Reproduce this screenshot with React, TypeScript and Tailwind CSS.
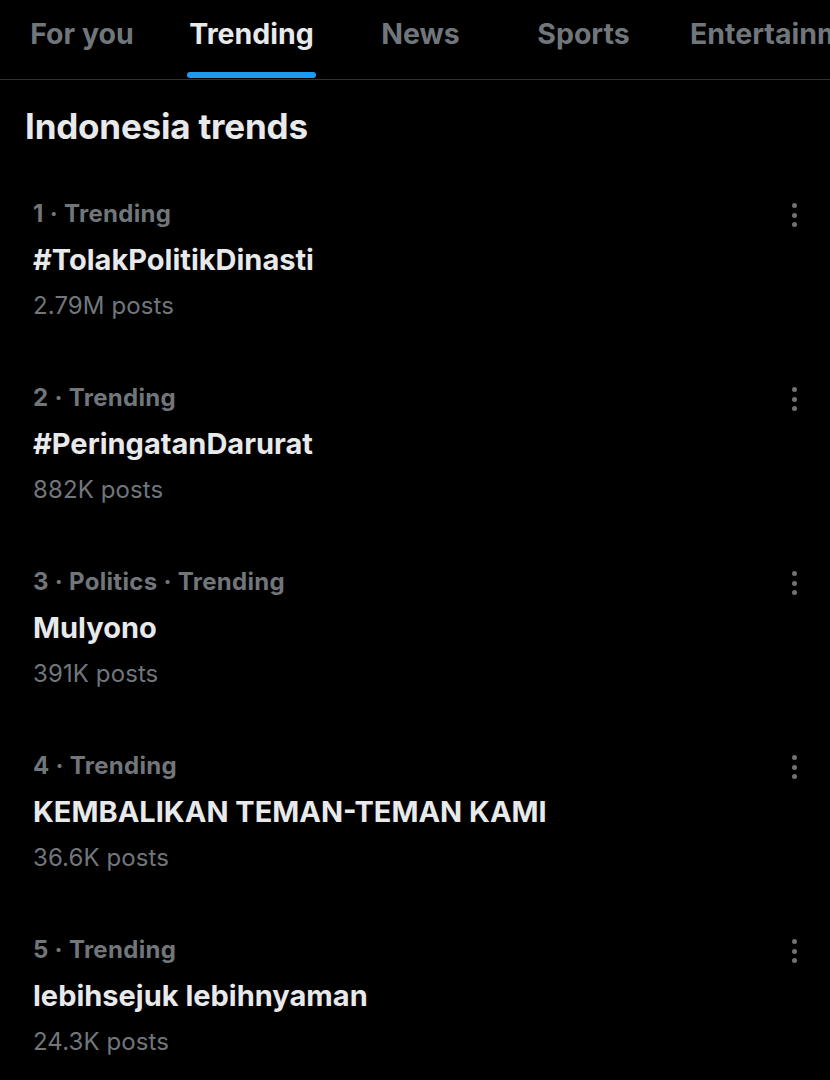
const tabs = [
  { label: "For you", w: "w-[164px] justify-center" },
  { label: "Trending", w: "w-[175px] justify-center", active: true },
  { label: "News", w: "w-[163px] justify-center" },
  { label: "Sports", w: "w-[163px] justify-center" },
  { label: "Entertainment", w: "w-[240px] justify-start pl-[25px]" },
];

const trends = [
  { meta: "1 · Trending", title: "#TolakPolitikDinasti", posts: "2.79M posts" },
  { meta: "2 · Trending", title: "#PeringatanDarurat", posts: "882K posts" },
  { meta: "3 · Politics · Trending", title: "Mulyono", posts: "391K posts" },
  { meta: "4 · Trending", title: "KEMBALIKAN TEMAN-TEMAN KAMI", posts: "36.6K posts" },
  { meta: "5 · Trending", title: "lebihsejuk lebihnyaman", posts: "24.3K posts" },
];

function MoreDots() {
  return (
    <div className="flex flex-col items-center gap-[4.5px]">
      <span className="block h-[5px] w-[5px] rounded-full bg-[#6f7275]" />
      <span className="block h-[5px] w-[5px] rounded-full bg-[#6f7275]" />
      <span className="block h-[5px] w-[5px] rounded-full bg-[#6f7275]" />
    </div>
  );
}

export default function App() {
  return (
    <div
      className="min-h-screen w-[830px] overflow-hidden bg-black text-[#e7e9ea]"
      style={{ fontFamily: "Inter, 'Noto Sans', sans-serif" }}
    >
      {/* tabs */}
      <div className="flex h-[80px] border-b border-[#2f3336] whitespace-nowrap overflow-hidden">
        {tabs.map((t) => (
          <div key={t.label} className={`${t.w} shrink-0 flex`}>
            <div className="flex flex-col items-stretch">
              <span
                className={`pt-[14px] text-[28.5px] font-bold leading-[40px] ${
                  t.active ? "text-[#e7e9ea]" : "text-[#71767b]"
                }`}
              >
                {t.label}
              </span>
              {t.active && <div className="mt-[18px] -mx-[2px] h-[6px] rounded-full bg-[#1d9bf0]" />}
            </div>
          </div>
        ))}
      </div>

      <h1 className="px-[25px] pt-[23px] text-[35px] font-bold leading-[46px] tracking-[-0.2px]">
        Indonesia trends
      </h1>

      <div className="mt-[42px] flex flex-col gap-[46px]">
        {trends.map((t) => (
          <div key={t.title} className="flex items-start justify-between pl-[33px] pr-[33px]">
            <div className="flex flex-col">
              <span className="text-[24px] font-bold leading-[46px] tracking-[0.3px] text-[#71767b]">
                {t.meta}
              </span>
              <span className="text-[29px] font-bold leading-[46px] text-[#e7e9ea]">
                {t.title}
              </span>
              <span className="text-[24px] leading-[46px] tracking-[0.1px] text-[#71767b]">
                {t.posts}
              </span>
            </div>
            <div className="mt-[12px]">
              <MoreDots />
            </div>
          </div>
        ))}
      </div>
    </div>
  );
}
